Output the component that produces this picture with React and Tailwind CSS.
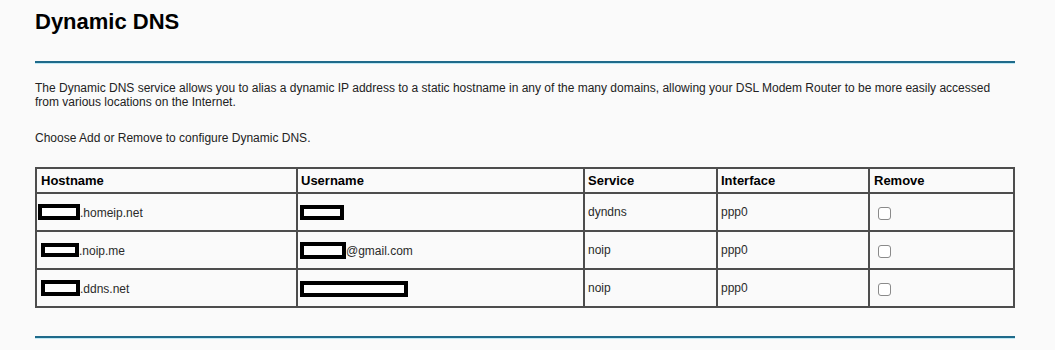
import React from 'react';

const rows = [
    { host: 'homeip.net', hostBox: 'w-[42px] h-[16px] -ml-[3px]', user: null, userBox: 'w-[44px] h-[15px]', service: 'dyndns' },
    { host: 'noip.me', hostBox: 'w-[38px] h-[14px]', user: '@gmail.com', userBox: 'w-[46px] h-[17px]', service: 'noip' },
    { host: 'ddns.net', hostBox: 'w-[39px] h-[16px]', user: null, userBox: 'w-[108px] h-[16px]', service: 'noip' }
];

const Redacted = ({ className }) => (
    <span className={`inline-block align-middle border-[4px] border-black bg-white ${className}`} />
);

const App = () => {
    return (
        <div className="min-h-[350px] bg-[#fafafa] px-[35px] pt-[8px] font-['Liberation_Sans',Arial,sans-serif] text-[#222]">
            <h1 className="text-[22px] font-bold leading-[28px] text-black">Dynamic DNS</h1>
            <div className="mt-[25px] h-[3px] w-[980px] border-t-2 border-[#1f6a8a] bg-[#bfe9f5]" />

            <p className="mt-[17px] w-[980px] text-[12px] leading-[14px]">
                The Dynamic DNS service allows you to alias a dynamic IP address to a static hostname in any of the many domains, allowing your DSL Modem Router to be more easily accessed from various locations on the Internet.
            </p>
            <p className="mt-[22px] text-[12px] leading-[14px]">Choose Add or Remove to configure Dynamic DNS.</p>

            <table className="mt-[22px] w-[980px] border-collapse border-2 border-[#4d4d4d] text-[12px] text-[#2a2a2a]">
                <thead>
                    <tr className="h-[25px] text-left text-[13px] font-bold text-black">
                        <th className="w-[261px] border-2 border-[#4d4d4d] px-[4px] font-bold">Hostname</th>
                        <th className="w-[287px] border-2 border-[#4d4d4d] px-[3px] font-bold">Username</th>
                        <th className="w-[133px] border-2 border-[#4d4d4d] px-[3px] font-bold">Service</th>
                        <th className="w-[152px] border-2 border-[#4d4d4d] px-[3px] font-bold">Interface</th>
                        <th className="border-2 border-[#4d4d4d] px-[4px] font-bold">Remove</th>
                    </tr>
                </thead>
                <tbody>
                    {rows.map((r, i) => (
                        <tr key={i} className="h-[38px]">
                            <td className="border-2 border-[#4d4d4d] px-[4px]">
                                <Redacted className={r.hostBox} />
                                <span className="align-middle">.{r.host}</span>
                            </td>
                            <td className="border-2 border-[#4d4d4d] px-[2px]">
                                <Redacted className={r.userBox} />
                                {r.user && <span className="align-middle">{r.user}</span>}
                            </td>
                            <td className="border-2 border-[#4d4d4d] px-[3px]">{r.service}</td>
                            <td className="border-2 border-[#4d4d4d] px-[3px]">ppp0</td>
                            <td className="border-2 border-[#4d4d4d] px-[8px]">
                                <span className="mt-[2px] block h-[13px] w-[13px] rounded-[3px] border border-[#8a8a8a] bg-white" />
                            </td>
                        </tr>
                    ))}
                </tbody>
            </table>

            <div className="mt-[28px] h-[3px] w-[980px] border-t-2 border-[#1f6a8a] bg-[#bfe9f5]" />
        </div>
    );
};

export default App;
